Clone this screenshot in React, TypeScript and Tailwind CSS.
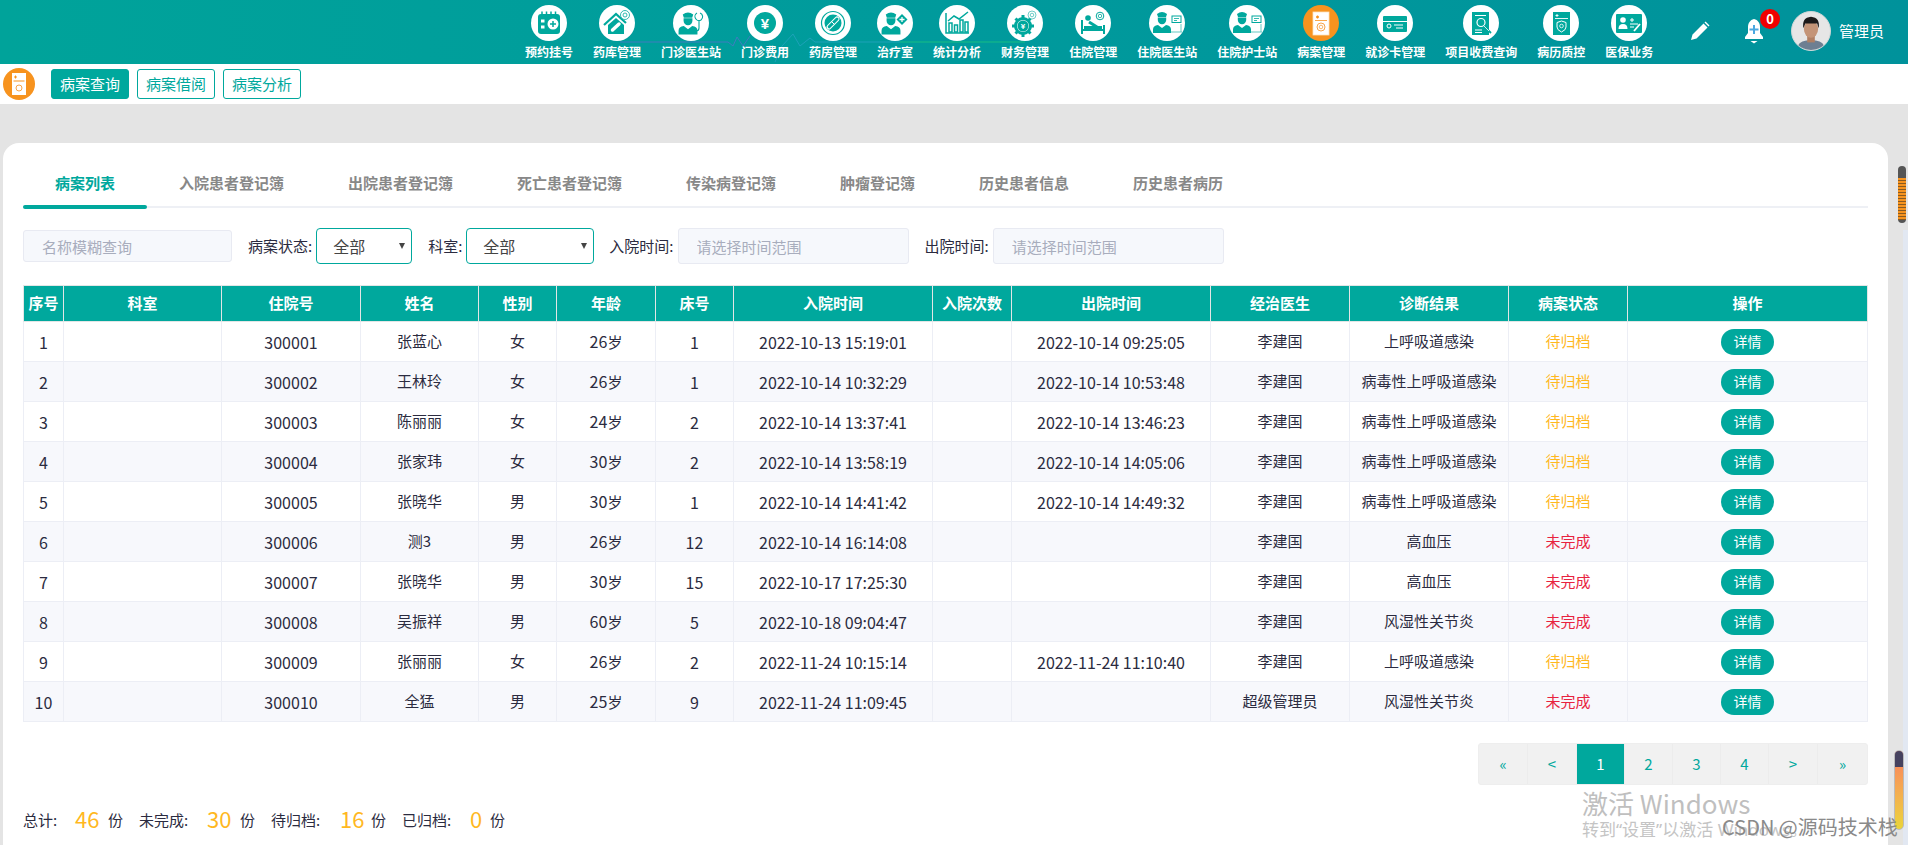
import React from "react";

const T = "#00a89d";

const Ring = ({ cx, cy, r = 4 }: { cx: number; cy: number; r?: number }) => (
  <g>
    <circle cx={cx} cy={cy} r={r} fill="none" stroke={T} strokeWidth="1" />
    <circle cx={cx} cy={cy} r={r * 0.45} fill="none" stroke={T} strokeWidth="0.8" />
  </g>
);

const Person = ({ x, y, s = 1, cap = false }: { x: number; y: number; s?: number; cap?: boolean }) => (
  <g transform={`translate(${x} ${y}) scale(${s})`}>
    {cap && <path d="M-5 -10 Q0 -14 5 -10 L4 -7 H-4 Z" fill={T} />}
    <path d="M-4.2 -6.5 H4.2 V-4 A4.2 4.2 0 0 1 -4.2 -4 Z" fill={T} />
    <path d="M-9 9 V5.5 Q-9 1.5 -4 1 L0 4 L4 1 Q9 1.5 9 5.5 V9 Z" fill={T} />
  </g>
);

const Monitor = ({ x, y }: { x: number; y: number }) => (
  <g>
    <rect x={x} y={y} width="9" height="6.5" fill="#fff" stroke={T} strokeWidth="1" />
    <path d={`M${x + 2} ${y + 2.5} h5 M${x + 2} ${y + 4.5} h3`} stroke={T} strokeWidth="0.8" />
    <path d={`M${x + 9} ${y + 8} v8 M${x - 1} ${y + 16} h11`} stroke={T} strokeWidth="1" opacity="0.6" />
  </g>
);

const icons: React.ReactNode[] = [
  <g key="0">
    <rect x="7" y="9" width="22" height="20" rx="3" fill={T} />
    <path d="M11 6.5v4M15.5 6.5v4M20 6.5v4M24.5 6.5v4" stroke={T} strokeWidth="1.5" />
    <circle cx="22" cy="19" r="5.5" fill="#fff" />
    <path d="M22 16v6M19 19h6" stroke={T} strokeWidth="1.5" />
    <rect x="10" y="14.5" width="3.5" height="3" fill="#fff" />
    <rect x="10" y="20.5" width="3.5" height="3" fill="#fff" />
  </g>,
  <g key="1">
    <path d="M5 20 L17 9 L27 18" fill="none" stroke={T} strokeWidth="2.2" />
    <path d="M9 20 L17 13 L25 20 V29 H9 Z" fill={T} />
    <path d="M13.5 25 L20 19" stroke="#fff" strokeWidth="3.5" strokeLinecap="round" />
    <circle cx="26" cy="10" r="4.5" fill="#fff" stroke={T} strokeWidth="0.8" />
    <circle cx="26" cy="10" r="2" fill="none" stroke={T} strokeWidth="0.8" />
  </g>,
  <g key="2">
    <Person x={15} y={20} s={1.05} cap />
    <path d="M24 8 a4 4 0 0 0 4 7 a4 4 0 0 0 -1 -7 M26 15 v8 q0 3 -3 3" fill="none" stroke={T} strokeWidth="1.1" />
  </g>,
  <g key="3">
    <circle cx="18" cy="18" r="11" fill={T} />
    <text x="18" y="23.5" textAnchor="middle" fontSize="15" fontWeight="700" fill="#fff" fontFamily="Liberation Sans, sans-serif">¥</text>
  </g>,
  <g key="4">
    <circle cx="18" cy="18" r="11.5" fill="none" stroke={T} strokeWidth="1.2" />
    <circle cx="18" cy="18" r="8.5" fill={T} />
    <path d="M14 22 L22 14" stroke="#fff" strokeWidth="5" strokeLinecap="round" />
    <path d="M14.2 21.8 L22 14" stroke={T} strokeWidth="3" strokeLinecap="round" />
    <path d="M16.5 16.5 L19.5 19.5" stroke="#fff" strokeWidth="1" />
  </g>,
  <g key="5">
    <Person x={14} y={20} s={1.05} cap />
    <path d="M25 9 L30.5 14.5 L25 20 L19.5 14.5 Z" fill={T} />
    <path d="M25 12v5M22.5 14.5h5" stroke="#fff" strokeWidth="1.3" />
  </g>,
  <g key="6">
    <path d="M7 8 V28 H30" fill="none" stroke={T} strokeWidth="1.5" />
    <path d="M10 27 V18 h3 V27 Z M15.5 27 V20 h3 V27 Z M21 27 V15 h3 V27 Z M26 27 V17 h3 V27 Z" fill="none" stroke={T} strokeWidth="1.5" />
    <path d="M9 16 L15 11 L20 14 L29 7" fill="none" stroke={T} strokeWidth="1.5" />
  </g>,
  <g key="7">
    <circle cx="16" cy="21" r="7.5" fill="none" stroke={T} strokeWidth="3" />
    <path d="M16 10v3M16 29v3M5 21h3M24 21h3M8.5 13.5l2 2M21.5 26.5l2 2M8.5 28.5l2-2M23.5 13.5l-2 2" stroke={T} strokeWidth="3" />
    <circle cx="16" cy="21" r="5.5" fill={T} />
    <text x="16" y="24" textAnchor="middle" fontSize="8" fontWeight="700" fill="#fff" fontFamily="Liberation Sans, sans-serif">¥</text>
    <circle cx="25" cy="10" r="4" fill="#fff" stroke={T} strokeWidth="0.8" opacity="0.7" />
    <circle cx="25" cy="10" r="1.8" fill="none" stroke={T} strokeWidth="0.8" opacity="0.7" />
  </g>,
  <g key="8">
    <path d="M7 15 V29 M29 20 V29 M7 25 H29" fill="none" stroke={T} strokeWidth="2" />
    <rect x="9" y="21" width="18" height="5" fill={T} />
    <circle cx="13" cy="13" r="2.8" fill={T} />
    <path d="M14 17 L22 22" stroke={T} strokeWidth="3" />
    <Ring cx={25} cy={11} r={3.8} />
  </g>,
  <g key="9">
    <Person x={13} y={19} s={1} cap />
    <Monitor x={23} y={11} />
  </g>,
  <g key="10">
    <Person x={13} y={19} s={1} cap />
    <Monitor x={23} y={11} />
  </g>,
  <g key="11">
    <rect x="10" y="7" width="16" height="23" fill="#fff" stroke="#fde3bf" strokeWidth="0.8" />
    <path d="M13 12 h3 M14.5 10.5 v3" stroke="#f7931e" strokeWidth="1.3" />
    <path d="M12 15.5 h12" stroke="#f7931e" strokeWidth="0.8" />
    <circle cx="18" cy="22" r="4" fill="none" stroke="#f7a44a" strokeWidth="1" />
    <circle cx="18" cy="22" r="1.8" fill="none" stroke="#f7a44a" strokeWidth="0.8" />
  </g>,
  <g key="12">
    <rect x="6" y="11" width="24" height="16" rx="1" fill={T} />
    <path d="M6 16.5 h24" stroke="#fff" strokeWidth="1" />
    <circle cx="12" cy="21" r="2" fill="none" stroke="#fff" strokeWidth="1" />
    <path d="M17 20 h9 M19 23 h7" stroke="#fff" strokeWidth="1" />
  </g>,
  <g key="13">
    <rect x="9" y="7" width="17" height="23" fill={T} />
    <path d="M12 10.5 h11 M12 25 h7 M12 27.5 h7" stroke="#fff" strokeWidth="1" />
    <circle cx="18" cy="17.5" r="4" fill="none" stroke="#fff" strokeWidth="1.2" />
    <path d="M21 21 L28 28" stroke={T} strokeWidth="1.8" />
    <path d="M21 21 L26 26" stroke="#fff" strokeWidth="0.8" />
  </g>,
  <g key="14">
    <rect x="10" y="7" width="17" height="23" fill={T} />
    <path d="M12.5 10.5h3M14 9v3M12 13.5h13" stroke="#fff" strokeWidth="0.9" />
    <path d="M18.5 16 L23 17.5 V22 Q23 25 18.5 27 Q14 25 14 22 V17.5 Z" fill="none" stroke="#fff" strokeWidth="1" />
    <circle cx="18.5" cy="21" r="1.8" fill="none" stroke="#fff" strokeWidth="0.8" />
  </g>,
  <g key="15">
    <rect x="5" y="9" width="26" height="19" rx="1" fill={T} />
    <circle cx="12" cy="15" r="2.8" fill="#fff" />
    <path d="M7.5 24 Q7.5 19 12 19 Q16.5 19 16.5 24 Z" fill="#fff" />
    <path d="M19 15h4M21 13v4M19 19h8M19 22h4" stroke="#fff" strokeWidth="1" />
    <path d="M23 26 L29 19" stroke="#fff" strokeWidth="1.8" />
  </g>,
];

const navItems = ["预约挂号", "药库管理", "门诊医生站", "门诊费用", "药房管理", "治疗室", "统计分析", "财务管理", "住院管理", "住院医生站", "住院护士站", "病案管理", "就诊卡管理", "项目收费查询", "病历质控", "医保业务"];

const tabs = ["病案列表", "入院患者登记簿", "出院患者登记簿", "死亡患者登记簿", "传染病登记簿", "肿瘤登记簿", "历史患者信息", "历史患者病历"];

const heads = [
  { t: "序号", w: "w-[40px]" },
  { t: "科室", w: "w-[158px]" },
  { t: "住院号", w: "w-[139px]" },
  { t: "姓名", w: "w-[118px]" },
  { t: "性别", w: "w-[78px]" },
  { t: "年龄", w: "w-[99px]" },
  { t: "床号", w: "w-[78px]" },
  { t: "入院时间", w: "w-[199px]" },
  { t: "入院次数", w: "w-[79px]" },
  { t: "出院时间", w: "w-[199px]" },
  { t: "经治医生", w: "w-[139px]" },
  { t: "诊断结果", w: "w-[159px]" },
  { t: "病案状态", w: "w-[119px]" },
  { t: "操作", w: "w-[240px]" },
];

const rows = [
  ["300001", "张蓝心", "女", "26", "1", "2022-10-13 15:19:01", "2022-10-14 09:25:05", "李建国", "上呼吸道感染", "待归档"],
  ["300002", "王林玲", "女", "26", "1", "2022-10-14 10:32:29", "2022-10-14 10:53:48", "李建国", "病毒性上呼吸道感染", "待归档"],
  ["300003", "陈丽丽", "女", "24", "2", "2022-10-14 13:37:41", "2022-10-14 13:46:23", "李建国", "病毒性上呼吸道感染", "待归档"],
  ["300004", "张家玮", "女", "30", "2", "2022-10-14 13:58:19", "2022-10-14 14:05:06", "李建国", "病毒性上呼吸道感染", "待归档"],
  ["300005", "张晓华", "男", "30", "1", "2022-10-14 14:41:42", "2022-10-14 14:49:32", "李建国", "病毒性上呼吸道感染", "待归档"],
  ["300006", "测3", "男", "26", "12", "2022-10-14 16:14:08", "", "李建国", "高血压", "未完成"],
  ["300007", "张晓华", "男", "30", "15", "2022-10-17 17:25:30", "", "李建国", "高血压", "未完成"],
  ["300008", "吴振祥", "男", "60", "5", "2022-10-18 09:04:47", "", "李建国", "风湿性关节炎", "未完成"],
  ["300009", "张丽丽", "女", "26", "2", "2022-11-24 10:15:14", "2022-11-24 11:10:40", "李建国", "上呼吸道感染", "待归档"],
  ["300010", "全猛", "男", "25", "9", "2022-11-24 11:09:45", "", "超级管理员", "风湿性关节炎", "未完成"],
];

const pages = [
  { t: "«", w: "w-[49px]" },
  { t: "<", w: "w-[49px]" },
  { t: "1", w: "w-[48px]", on: true },
  { t: "2", w: "w-[48px]" },
  { t: "3", w: "w-[48px]" },
  { t: "4", w: "w-[48px]" },
  { t: ">", w: "w-[49px]" },
  { t: "»", w: "w-[49px]" },
];

const totals = [
  { l: "总计:", n: "46", lw: "w-[52px]", nw: "w-[33px]" },
  { l: "未完成:", n: "30", lw: "w-[68px]", nw: "w-[33px]" },
  { l: "待归档:", n: "16", lw: "w-[69px]", nw: "w-[31px]" },
  { l: "已归档:", n: "0", lw: "w-[68px]", nw: "w-[20px]" },
];

function Select({ w }: { w: string }) {
  return (
    <div className={`${w} h-[36px] flex items-center justify-between pl-[16px] pr-[6px] border border-[#00a89d] rounded-[4px] text-[16px] text-[#444] bg-white`}>
      <span>全部</span>
      <svg width="6" height="6" viewBox="0 0 6 6">
        <path d="M0 0H6L3 6Z" fill="#444" />
      </svg>
    </div>
  );
}

export default function App() {
  return (
    <div className="relative w-[1908px] h-[845px] overflow-hidden bg-[#e4e4e4] font-['Noto_Sans_CJK_SC','Noto_Sans',sans-serif] text-[15px] text-[#2b2b40]">
      <header className="relative h-[64px] bg-gradient-to-r from-[#00a39a] via-[#009a9c] to-[#00929b] flex">
        <svg className="absolute left-0 top-0" width="1100" height="64" fill="none" opacity="0.7">
          <path d="M620 42H728L733 46L737 37L743 46L750 36" stroke="#5a6fd0" />
          <path d="M775 62L782 46L793 34L800 46L810 38L815 42H900" stroke="#2aa5c5" />
          <path d="M900 42H1025" stroke="#21d07a" />
        </svg>
        <nav className="relative ml-[525px] flex gap-5 pt-[5px]">
          {navItems.map((n, i) => (
            <div key={n} className="flex flex-col items-center">
              <div className={`w-[36px] h-[36px] rounded-full ${i === 11 ? "bg-[#f7931e]" : "bg-white"}`}>
                <svg width="36" height="36" viewBox="0 0 36 36">
                  {icons[i]}
                </svg>
              </div>
              <span className="mt-[2px] text-[12px] leading-[18px] font-bold text-white whitespace-nowrap">{n}</span>
            </div>
          ))}
        </nav>
        <div className="relative ml-auto flex items-center pr-[24px] pb-[2px]">
          <svg width="20" height="20" viewBox="0 0 20 20" className="mr-[34px]">
            <path d="M1 19L2.5 13.5L13.5 2.5L17.5 6.5L6.5 17.5Z M14.5 1.5L15.5 .5L19.5 4.5L18.5 5.5Z" fill="#fff" />
          </svg>
          <div className="relative w-[20px] h-[26px] mr-[27px]">
            <svg width="20" height="26" viewBox="0 0 20 26">
              <path d="M10 1C6 2 4 5 4 9V15L1 19V21H19V19L16 15V9C16 5 14 2 10 1Z" fill="#fff" />
              <path d="M6.5 23H13.5L10 25.5Z" fill="#fff" />
              <path d="M10 7V16M5.5 11.5H14.5" stroke="#4aa8e0" strokeWidth="2" />
            </svg>
            <span className="absolute left-[16px] -top-[9px] w-[20px] h-[20px] rounded-full bg-[#f00000] text-white text-[13px] font-bold flex items-center justify-center">0</span>
          </div>
          <svg width="40" height="40" viewBox="0 0 40 40" className="rounded-full border border-[#cfd8d8] bg-[#e6e6e6]">
            <path d="M5 40Q6 31 15 30H25Q34 31 35 40Z" fill="#6d7f92" />
            <rect x="16" y="23" width="8" height="9" fill="#b07f63" />
            <ellipse cx="20" cy="18" rx="7.5" ry="9" fill="#c49477" />
            <path d="M12 17Q10 6 20 5Q30 6 28 17L26.5 12H14Z" fill="#1d1a1a" />
          </svg>
          <span className="ml-[8px] text-[15px] text-white">管理员</span>
        </div>
      </header>

      <div className="h-[40px] bg-white flex items-center pl-[3px]">
        <div className="w-[32px] h-[32px] rounded-full bg-[#f7931e] flex items-center justify-center">
          <svg width="14" height="22" viewBox="0 0 14 22">
            <rect width="14" height="22" fill="#fff" />
            <path d="M2 4h3M3.5 2.5v3M1.5 8h11" stroke="#f7931e" strokeWidth="1" />
            <circle cx="7" cy="15" r="3" fill="none" stroke="#f7a44a" />
          </svg>
        </div>
        <div className="ml-[16px] flex gap-[8px] text-[15px]">
          <button className="w-[78px] h-[30px] rounded-[3px] border border-[#00a89d] bg-[#00a89d] text-white">病案查询</button>
          <button className="w-[78px] h-[30px] rounded-[3px] border border-[#00a89d] bg-white text-[#00a89d]">病案借阅</button>
          <button className="w-[78px] h-[30px] rounded-[3px] border border-[#00a89d] bg-white text-[#00a89d]">病案分析</button>
        </div>
      </div>

      <main className="pt-[39px] pl-[3px]">
        <section className="w-[1885px] h-[702px] bg-white rounded-t-[16px] px-[20px] pt-[17px]">
          <div className="flex h-[48px] border-b-2 border-[#eef0f5]">
            {tabs.map((t, i) => (
              <div key={t} className={`relative h-[46px] px-[32px] flex items-center text-[15px] font-bold ${i === 0 ? "text-[#00a89d]" : "text-[#888888]"}`}>
                {t}
                {i === 0 && <span className="absolute left-0 right-0 -bottom-[3px] h-[4px] rounded-full bg-[#00a89d]" />}
              </div>
            ))}
          </div>

          <div className="mt-[20px] h-[36px] flex items-center">
            <input readOnly placeholder="名称模糊查询" className="w-[209px] h-[32px] pl-[18px] rounded-[3px] border border-[#e8eaf2] bg-[#f6f8fc] text-[15px] placeholder:text-[#a8adbd] outline-none" />
            <span className="ml-[16px] mr-[4px] whitespace-nowrap">病案状态:</span>
            <Select w="w-[96px]" />
            <span className="ml-[16px] mr-[4px] whitespace-nowrap">科室:</span>
            <Select w="w-[128px]" />
            <span className="ml-[15px] mr-[4px] whitespace-nowrap">入院时间:</span>
            <input readOnly placeholder="请选择时间范围" className="w-[231px] h-[36px] pl-[18px] rounded-[3px] border border-[#e8eaf2] bg-[#f6f8fc] text-[15px] placeholder:text-[#a8adbd] outline-none" />
            <span className="ml-[16px] mr-[4px] whitespace-nowrap">出院时间:</span>
            <input readOnly placeholder="请选择时间范围" className="w-[231px] h-[36px] pl-[18px] rounded-[3px] border border-[#e8eaf2] bg-[#f6f8fc] text-[15px] placeholder:text-[#a8adbd] outline-none" />
          </div>

          <table className="mt-[21px] w-[1845px] table-fixed border-collapse text-center">
            <colgroup>
              {heads.map((h) => (
                <col key={h.t} className={h.w} />
              ))}
            </colgroup>
            <thead>
              <tr className="h-[36px] bg-[#00a89d] text-white">
                {heads.map((h) => (
                  <th key={h.t} className="border border-[#e2e6e6] p-0 text-[15px] font-bold whitespace-nowrap">{h.t}</th>
                ))}
              </tr>
            </thead>
            <tbody>
              {rows.map((r, i) => (
                <tr key={r[0]} className={`h-[40px] ${i % 2 === 1 ? "bg-[#f7f8fc]" : "bg-white"}`}>
                  <td className="border border-[#eceef5] p-0 text-[16px]">{i + 1}</td>
                  <td className="border border-[#eceef5] p-0"></td>
                  <td className="border border-[#eceef5] p-0 text-[16px]">{r[0]}</td>
                  <td className="border border-[#eceef5] p-0">{r[1]}</td>
                  <td className="border border-[#eceef5] p-0">{r[2]}</td>
                  <td className="border border-[#eceef5] p-0"><span className="text-[16px]">{r[3]}</span>岁</td>
                  <td className="border border-[#eceef5] p-0 text-[16px]">{r[4]}</td>
                  <td className="border border-[#eceef5] p-0 text-[16px]">{r[5]}</td>
                  <td className="border border-[#eceef5] p-0"></td>
                  <td className="border border-[#eceef5] p-0 text-[16px]">{r[6]}</td>
                  <td className="border border-[#eceef5] p-0">{r[7]}</td>
                  <td className="border border-[#eceef5] p-0 whitespace-nowrap">{r[8]}</td>
                  <td className={`border border-[#eceef5] p-0 ${r[9] === "待归档" ? "text-[#ffb81f]" : "text-[#e8233f]"}`}>{r[9]}</td>
                  <td className="border border-[#eceef5] p-0">
                    <button className="w-[53px] h-[26px] rounded-full bg-[#00a89d] text-white text-[14px] align-middle">详情</button>
                  </td>
                </tr>
              ))}
            </tbody>
          </table>

          <div className="mt-[21px] flex justify-end">
            <div className="flex h-[42px] border border-[#eeeeee] rounded-[3px] bg-[#f1f1f1] text-[#00a89d]">
              {pages.map((p) => (
                <div key={p.t} className={`${p.w} flex items-center justify-center border-r border-[#ececec] last:border-r-0 ${p.on ? "bg-[#00a89d] text-white" : ""}`}>
                  {p.t}
                </div>
              ))}
            </div>
          </div>

          <div className="mt-[21px] h-[28px] flex items-center">
            {totals.map((t) => (
              <div key={t.l} className="flex items-center mr-[16px]">
                <span className={`${t.lw} whitespace-nowrap`}>{t.l}</span>
                <span className={`${t.nw} mb-[4px] text-[22px] leading-[28px] text-[#ffb81f]`}>{t.n}</span>
                <span>份</span>
              </div>
            ))}
          </div>
        </section>
      </main>

      {/* scrollbars */}
      <div className="absolute right-0 top-[230px] bottom-0 w-[5px] bg-[#e2e8f2]" />
      <div className="absolute left-[1898px] top-[166px] w-[8px] h-[57px] rounded-full bg-[#555] overflow-hidden pt-[12px]">
        <div className="h-[42px] bg-[repeating-linear-gradient(to_bottom,#f7931e_0,#f7931e_2px,#8a5a20_2px,#8a5a20_3px)]" />
      </div>
      <div className="absolute left-[1894px] top-[750px] w-[10px] h-[80px] rounded-full overflow-hidden border border-[#bbb] bg-gradient-to-b from-[#f97d5c] to-[#ead43a]">
        <div className="h-[16px] bg-[#46425f]" />
      </div>

      {/* windows watermark */}
      <div className="absolute left-[1582px] top-[786px] text-[26px] leading-[34px] text-[#bfbfbf] whitespace-nowrap">激活 Windows</div>
      <div className="absolute left-[1582px] top-[818px] text-[17px] leading-[24px] text-[#c4c4c4] font-['Noto_Sans','Noto_Sans_CJK_SC',sans-serif] whitespace-nowrap">转到“设置”以激活 Windows。</div>
      <div className="absolute left-[1722px] top-[814px] text-[20px] leading-[26px] text-[#8a8a8a] whitespace-nowrap">CSDN @源码技术栈</div>
    </div>
  );
}
